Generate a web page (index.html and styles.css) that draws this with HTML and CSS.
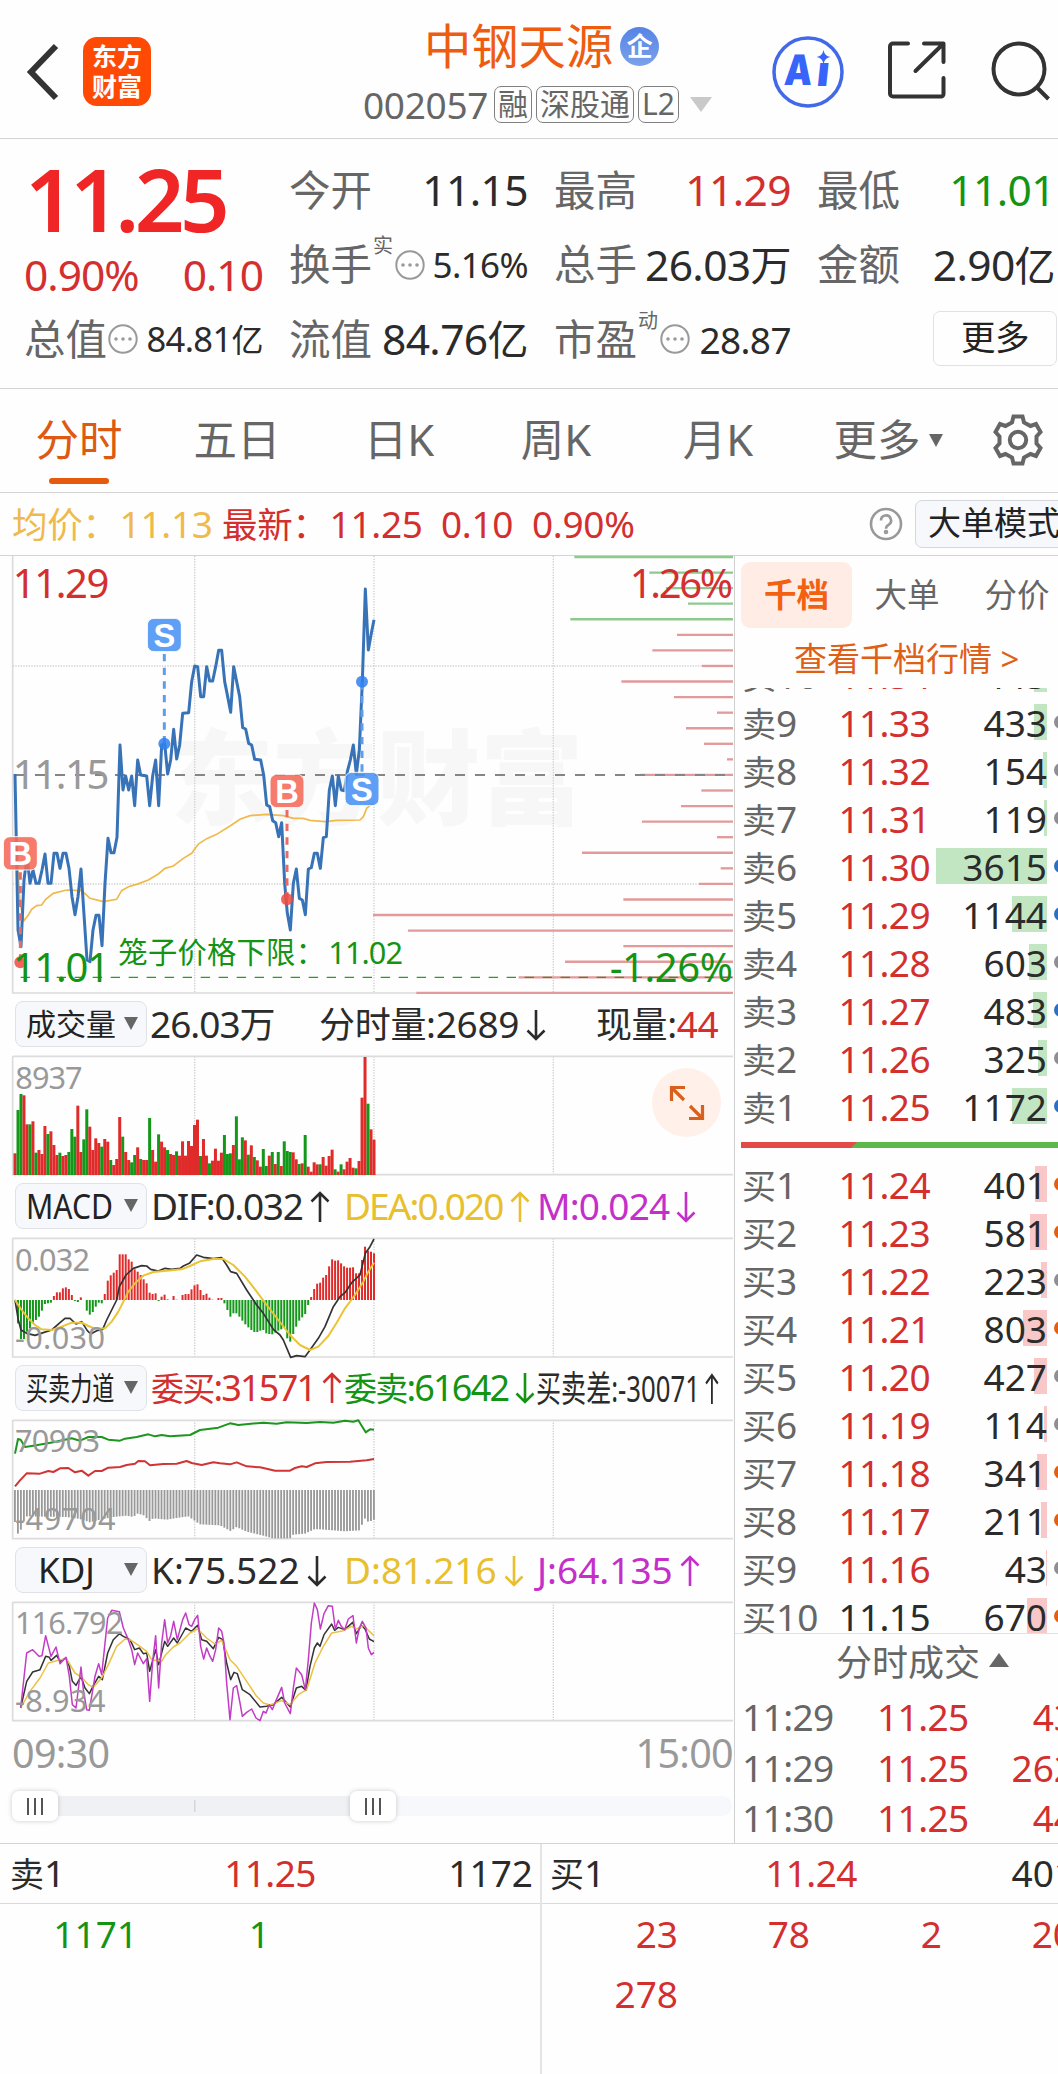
FILE: index.html
```html
<!DOCTYPE html>
<html lang="zh-CN">

<head>
    <meta charset="UTF-8">
    <meta name="viewport" content="width=device-width, initial-scale=1.0">
    <title>中钢天源 002057</title>
    <link rel="stylesheet" href="styles.css">
</head>

<body>
    <svg class="defs" width="0" height="0">
        <symbol id="up" viewBox="0 0 20 32">
            <path d="M10 31V2M1.5 10.5L10 2l8.500 8.500" fill="none" stroke="currentColor" stroke-width="2.600" />
        </symbol>
        <symbol id="down" viewBox="0 0 20 32">
            <path d="M10 1v29M1.500 21.500L10 30l8.500-8.500" fill="none" stroke="currentColor" stroke-width="2.600" />
        </symbol>
        <symbol id="dots" viewBox="0 0 30 30">
            <circle cx="15" cy="15" r="13.700" fill="none" stroke="#999" stroke-width="2" />
            <circle cx="8" cy="15" r="1.800" fill="#999" />
            <circle cx="15" cy="15" r="1.800" fill="#999" />
            <circle cx="22" cy="15" r="1.800" fill="#999" />
        </symbol>
    </svg>

    <!-- Top bar -->
    <header class="topbar">
        <svg class="back" viewBox="0 0 34 58" width="34" height="58">
            <path d="M30 3L5 29l25 26" fill="none" stroke="#333" stroke-width="6" />
        </svg>
        <div class="logo"><span>东方</span><span>财富</span></div>
        <div class="stock">
            <div class="stock-name">中钢天源<span class="badge">企</span></div>
            <div class="stock-code">
                <span class="code">002057</span>
                <span class="tag">融</span>
                <span class="tag">深股通</span>
                <span class="tag">L2</span>
                <i class="caret"></i>
            </div>
        </div>
        <div class="actions">
            <svg width="72" height="74" viewBox="0 0 72 74">
                <circle cx="36" cy="37" r="34" fill="none" stroke="#4169e8" stroke-width="3.500" />
                <text class="ai" x="12" y="50" transform="skewX(-4) translate(3 0)" textLength="28" lengthAdjust="spacingAndGlyphs">A</text>
                <text class="ai" x="44" y="51" transform="skewX(-6) translate(5 0)" font-size="38">ı</text>
                <path d="M51.500 15q1 6 7 7q-6 1-7 7q-1-6-7-7q6-1 7-7z" fill="#3964fa" />
            </svg>
            <svg class="share" width="58" height="58" viewBox="0 0 58 58" fill="none" stroke="#333" stroke-width="4" stroke-linecap="round" stroke-linejoin="round">
                <path d="M20 2.500H5a3 3 0 0 0-3 3V52.500a3 3 0 0 0 3 3H53a2.500 2.500 0 0 0 2.500-2.500V37M36 2.500H55.500V21M54.500 3.500L27.500 30" />
            </svg>
            <svg class="search" width="60" height="62" viewBox="0 0 60 62" fill="none" stroke="#333" stroke-width="4">
                <circle cx="28" cy="29" r="25.500" />
                <path d="M46 47.500L57.500 59" />
            </svg>
        </div>
    </header>

    <!-- Quote summary -->
    <section class="quote">
        <div class="price-big">11.25</div>
        <div class="cell"><span class="label">今开</span><b>11.15</b></div>
        <div class="cell"><span class="label">最高</span><b class="red">11.29</b></div>
        <div class="cell low"><span class="label">最低</span><b class="green">11.01</b></div>

        <div class="cell change"><b class="red">0.90%</b><b class="red">0.10</b></div>
        <div class="cell"><span class="label">换手<sup>实</sup><svg class="more-dot" width="30" height="30"><use href="#dots" /></svg></span><b class="s35">5.16%</b></div>
        <div class="cell"><span class="label">总手</span><b>26.03<i>万</i></b></div>
        <div class="cell low"><span class="label">金额</span><b>2.90<i>亿</i></b></div>

        <div class="cell"><span class="label">总值<svg class="more-dot near" width="30" height="30"><use href="#dots" /></svg></span><b class="s34">84.81<i>亿</i></b></div>
        <div class="cell"><span class="label">流值</span><b>84.76<i>亿</i></b></div>
        <div class="cell"><span class="label">市盈<sup>动</sup><svg class="more-dot" width="30" height="30"><use href="#dots" /></svg></span><b class="s37">28.87</b></div>
        <div class="cell"><span class="more-btn">更多</span></div>
    </section>

    <!-- Period tabs -->
    <nav class="tabs">
        <span class="tab active">分时</span>
        <span class="tab">五日</span>
        <span class="tab">日K</span>
        <span class="tab">周K</span>
        <span class="tab">月K</span>
        <span class="tab">更多<i class="tri"></i></span>
        <svg class="gear" width="52" height="52" viewBox="-26 -26 52 52" fill="none" stroke="#666" stroke-width="4">
            <path d="M-4.500-23.500H4.500L6-17.500L12.500-14L18-16L22.500-8L18.500-3.500V3.500L22.500 8L18 16L12.500 14L6 17.500L4.500 23.500H-4.500L-6 17.500L-12.500 14L-18 16L-22.500 8L-18.500 3.500V-3.500L-22.500-8L-18-16L-12.500-14L-6-17.500Z" />
            <circle r="8.200" />
        </svg>
    </nav>

    <div class="infobar">
        <span class="avg"><em>均价：</em>11.13</span>
        <span class="last red"><em>最新：</em>11.25</span>
        <span class="red diff">0.10</span>
        <span class="red pct">0.90%</span>
        <svg class="help" width="34" height="34" viewBox="0 0 34 34" fill="none" stroke="#999" stroke-width="2.600">
            <circle cx="17" cy="17" r="15" />
            <path d="M12 13.500a5 5 0 1 1 7.500 4.300q-2.500 1.500-2.500 4" />
            <circle cx="17" cy="25" r="1" />
        </svg>
        <span class="mode-btn">大单模式</span>
    </div>

    <main class="main">
        <section class="charts">
            <svg class="price-chart" width="734" height="437" viewBox="0 18 2202 1311">
                <text class="watermark" x="510" y="800" textLength="1240">东方财富</text>
                <g id="priceGrid"></g>
                <g id="levels"></g>
                <path class="dash-mid" d="M45 675H2199" />
                <path class="dash-low" d="M62 1282H2199" />
                <text x="38" y="718" class="grey" textLength="290">11.15</text>
                <polyline id="avgLine" class="line-avg" />
                <polyline id="priceLine" class="line-price" />
                <g id="marks"></g>
                <text x="38" y="143" class="red" textLength="290">11.29</text>
                <text x="38" y="1295" class="green" textLength="292">11.01</text>
                <text x="2199" y="143" class="red" text-anchor="end" textLength="310">1.26%</text>
                <text x="2199" y="1295" class="green" text-anchor="end" textLength="370">-1.26%</text>
                <text x="355" y="1239" class="green cage" textLength="620">笼子价格下限：</text>
                <text x="985" y="1241" class="green cage-num" textLength="224">11.02</text>
            </svg>

            <div class="panel">
                <div class="panel-head vol-head">
                    <span class="chip">成交量<i class="tri"></i></span>
                    <span class="v1">26.03<em>万</em></span>
                    <span class="v2"><em>分时量</em>:2689<svg width="20" height="32"><use href="#down" /></svg></span>
                    <span class="v3"><em>现量</em>:<span class="red">44</span></span>
                </div>
                <svg class="plot" id="volPlot" width="734" height="119" viewBox="0 198 2202 357"></svg>
                <span class="expand">
                    <svg width="36" height="36" viewBox="0 0 36 36" fill="none" stroke="#d9601c" stroke-width="3.200">
                        <path d="M2.500 16V2.500H16M3 3L15 15M33.500 20V33.500H20M33 33L21 21" />
                    </svg>
                </span>
            </div>

            <div class="panel">
                <div class="panel-head">
                    <span class="chip"><span class="macd">MACD</span><i class="tri"></i></span>
                    <span class="dif">DIF:0.032<svg width="20" height="32"><use href="#up" /></svg></span>
                    <span class="yellow dea">DEA:0.020<svg width="20" height="32"><use href="#up" /></svg></span>
                    <span class="purple m">M:0.024<svg width="20" height="32"><use href="#down" /></svg></span>
                </div>
                <svg class="plot" id="macdPlot" width="734" height="119" viewBox="0 744 2202 357"></svg>
            </div>

            <div class="panel">
                <div class="panel-head">
                    <span class="chip"><span class="narrow">买卖力道</span><i class="tri"></i></span>
                    <span class="red force"><em>委买</em>:31571<svg width="20" height="32"><use href="#up" /></svg></span>
                    <span class="green force"><em>委卖</em>:61642<svg width="20" height="32"><use href="#down" /></svg></span>
                    <span class="squeezed"><em>买卖差</em>:-30071<svg width="20" height="32"><use href="#up" /></svg></span>
                </div>
                <svg class="plot" id="forcePlot" width="734" height="119" viewBox="0 181 2202 357"></svg>
            </div>

            <div class="panel">
                <div class="panel-head">
                    <span class="chip"><span class="kdj">KDJ</span><i class="tri"></i></span>
                    <span>K:75.522<svg width="20" height="32"><use href="#down" /></svg></span>
                    <span class="yellow">D:81.216<svg width="20" height="32"><use href="#down" /></svg></span>
                    <span class="purple">J:64.135<svg width="20" height="32"><use href="#up" /></svg></span>
                </div>
                <svg class="plot" id="kdjPlot" width="734" height="119" viewBox="0 727 2202 357"></svg>
            </div>

            <div class="axis"><span>09:30</span><span>15:00</span></div>
            <div class="slider">
                <span class="handle"><i></i><i></i><i></i></span>
                <span class="range"></span>
                <span class="handle"><i></i><i></i><i></i></span>
                <span class="rest"></span>
            </div>
        </section>

        <aside class="book">
            <div class="book-tabs"><span class="on">千档</span><span>大单</span><span>分价</span></div>
            <div class="book-link">查看千档行情 &gt;</div>
            <div class="sells" id="sells"></div>
            <div class="ratio"><span class="ratio-buy"></span></div>
            <div class="buys" id="buys"></div>
            <div class="deals-title">分时成交<i class="tri-up"></i></div>
            <div class="deal"><span>11:29</span><b>11.25</b><b>43</b></div>
            <div class="deal"><span>11:29</span><b>11.25</b><b>262</b></div>
            <div class="deal"><span>11:30</span><b>11.25</b><b>44</b></div>
        </aside>
    </main>

    <footer class="queue">
        <div class="side">
            <div class="side-head"><span><em>卖</em>1</span><b class="red">11.25</b><span>1172</span></div>
            <div class="orders green"><span>1171</span><span>1</span></div>
        </div>
        <div class="side right">
            <div class="side-head"><span><em>买</em>1</span><b class="red">11.24</b><span>401</span></div>
            <div class="orders red"><span>23</span><span>78</span><span>2</span><span>20</span><span>278</span></div>
        </div>
    </footer>

    <script src="script.js"></script>
</body>

</html>
```
FILE: styles.css
```css
* {
    margin: 0;
    padding: 0;
    box-sizing: border-box;
}

body {
    width: 1058px;
    height: 2074px;
    overflow: hidden;
    background: #fefefe;
    color: #2b2b2b;
    font-family: "Noto Sans", "Noto Sans CJK SC", sans-serif;
    font-size: 37px;
    line-height: 1;
}

b, i, em {
    font-weight: normal;
    font-style: normal;
}

.defs { position: absolute; }

.red { color: #d32f2f; fill: #d32f2f; }
.green { color: #149414; fill: #149414; }
.grey { fill: #999; }
.yellow { color: #e8c02e; }
.purple { color: #c42fc9; }

/* Top bar */
.topbar {
    display: flex;
    height: 139px;
    padding: 37px 0 0 26px;
    border-bottom: 1px solid #d4d4d4;
}

.back { margin-top: 6px; }

.logo {
    display: flex;
    flex-direction: column;
    align-items: center;
    justify-content: center;
    gap: 3px;
    width: 68px;
    height: 69px;
    margin-left: 23px;
    border-radius: 14px;
    background: #ff4a05;
    color: #fff;
    font-size: 25px;
    font-weight: 700;
}

.logo span { height: 27px; line-height: 26px; }

.stock {
    width: 380px;
    margin: -18px 0 0 211px;
}

.stock-name {
    display: flex;
    align-items: center;
    height: 54px;
    padding-left: 62px;
    color: #ee5c10;
    font-size: 47.3px;
}

.badge {
    width: 39px;
    height: 39px;
    margin-left: 7px;
    border-radius: 50%;
    background: linear-gradient(#5684e6, #7ba1ea);
    color: #fff;
    font-size: 26px;
    font-weight: 700;
    line-height: 38px;
    text-align: center;
}

.stock-code {
    display: flex;
    align-items: center;
    margin-top: 13px;
    color: #666;
}

.code {
    width: 132px;
    padding-left: 1px;
    letter-spacing: -.3px;
}

.tag {
    height: 37px;
    margin-right: 4px;
    padding: 0 3px;
    border: 1.5px solid #808080;
    border-radius: 7px;
    font-size: 30px;
    line-height: 33px;
}

.caret {
    margin-left: 7px;
    border: 11px solid transparent;
    border-top: 15px solid #c9c9c9;
    border-bottom: 0;
}

.actions {
    display: flex;
    margin-left: 30px;
    flex: none;
}

.actions svg { flex: none; }
.actions svg:first-child { margin-top: -2px; }
.share { margin: 4px 0 0 44px; }
.search { margin: 3px 0 0 45px; }

.ai {
    fill: #3964fa;
    font-family: Inter, "Open Sans", sans-serif;
    font-size: 42px;
    font-weight: 900;
}

/* Quote summary */
.quote {
    display: grid;
    grid-template-columns: 239px 239px 237px 240px;
    grid-template-rows: repeat(3, 74.5px);
    column-gap: 26px;
    height: 250px;
    padding: 14px 0 0 24px;
    border-bottom: 1px solid #d4d4d4;
}

.price-big {
    padding-left: 1px;
    color: #f02626;
    font-size: 87px;
    font-weight: 600;
    line-height: 90px;
    letter-spacing: -4.6px;
}

.cell {
    display: flex;
    align-items: center;
    justify-content: space-between;
    font-size: 42.5px;
    letter-spacing: -.6px;
    white-space: nowrap;
}

.label {
    display: flex;
    align-items: center;
    color: #666;
    font-size: 41.5px;
    letter-spacing: 0;
}

.label sup {
    align-self: flex-start;
    margin: -8px 0 0 1px;
    font-size: 20px;
}

.cell i { font-size: 41px; }
.change { padding-top: 21px; letter-spacing: -1px; }
.low { padding-right: 2px; }
.s34, .s35 { font-size: 35px; }
.cell .s34 { font-size: 34.5px; }
.s34 i { font-size: 32px; }
.s37 { font-size: 37px; }
.more-dot { margin-left: 2px; }
.near { margin-left: 1px; }

.more-btn {
    width: 124px;
    height: 55px;
    margin: -2px 0 0 auto;
    border: 1.5px solid #e0e2e5;
    border-radius: 7px;
    color: #222;
    font-size: 34.5px;
    line-height: 50px;
    text-align: center;
}

/* Period tabs */
.tabs {
    display: grid;
    grid-template-columns: 158px 158px 166px 148px 176px 164px 1fr;
    height: 104px;
    border-bottom: 1px solid #d4d4d4;
    color: #666;
    font-size: 43.5px;
}

.tab {
    display: flex;
    align-items: center;
    justify-content: center;
    position: relative;
    padding-bottom: 1px;
}

.tab .tri { margin-left: 8px; }

.active { color: #dc5a12; }

.active::after {
    content: "";
    position: absolute;
    left: 49px;
    bottom: 8px;
    width: 60px;
    height: 6px;
    border-radius: 3px;
    background: #e55a0c;
}

.tri {
    border: 7.5px solid transparent;
    border-top: 13px solid #666;
    border-bottom: 0;
}

.gear { margin: 25px 0 0 22px; }

.infobar {
    display: flex;
    align-items: center;
    height: 63px;
    padding: 0 0 1px 12px;
    border-bottom: 1px solid #d4d4d4;
    white-space: nowrap;
    letter-spacing: -.3px;
}

.infobar > * { flex: none; }
.infobar em { margin-right: 2px; font-size: 35.5px; }
.avg { width: 210px; color: #efba4c; }
.last { width: 219px; }
.diff { width: 91px; }
.pct { width: 337px; }

.mode-btn {
    width: 160px;
    height: 48px;
    margin-left: 12px;
    padding-left: 12px;
    border: 1.5px solid #d4d8dd;
    border-radius: 7px;
    background: #f6f8fb;
    color: #222;
    font-size: 33px;
    line-height: 44px;
    letter-spacing: 0;
}

/* Charts */
.main {
    display: flex;
    height: 1288px;
    border-bottom: 1px solid #d4d4d4;
}

.charts {
    width: 735px;
    border-right: 1px solid #d0d0d0;
}

.charts svg { overflow: visible; }
.price-chart { display: block; }
.price-chart text { font-size: 120px; }
.price-chart .cage { font-size: 88px; }
.price-chart .cage-num { font-size: 92px; }

.price-chart .watermark {
    fill: #f7f7f7;
    font-size: 310px;
    font-weight: 900;
}

.frame { fill: none; stroke: #dcdcdc; stroke-width: 5; }
.dots { fill: none; stroke: #d0d0d0; stroke-width: 4; stroke-dasharray: 4 4; }
.dash-mid { stroke: #858585; stroke-width: 6; stroke-dasharray: 30 30; }
.dash-low { stroke: #2b9a2b; stroke-width: 4; stroke-dasharray: 28 26; }
.line-price { fill: none; stroke: #3873b7; stroke-width: 9; stroke-linejoin: round; }
.line-avg { fill: none; stroke: #f0b94c; stroke-width: 5; }

.price-chart .mark { fill: #fff; font-size: 98px; font-weight: 700; font-family: "Liberation Sans", sans-serif; }

.panel {
    position: relative;
    height: 182px;
}

.panel-head {
    display: grid;
    grid-template-columns: 133px 193px 193px 190px;
    align-items: center;
    height: 63px;
    padding: 0 0 2px 15px;
    white-space: nowrap;
}

.panel-head > span:not(.chip) { padding-left: 3px; }
.panel-head em { font-size: 36px; }
.panel-head svg { margin-left: 7px; vertical-align: -3px; }
.panel-head .dif { letter-spacing: -1.3px; }
.panel-head .dea { letter-spacing: -1.9px; }
.panel-head .m { letter-spacing: -.8px; }

.panel-head .force {
    padding-left: 0;
    font-size: 36px;
    letter-spacing: -1.8px;
}

.panel-head .force em { font-size: 33px; }

.panel-head.vol-head { grid-template-columns: 135px 169px 277px 150px; }
.panel-head.vol-head .v1, .panel-head.vol-head .v2, .panel-head.vol-head .v3 { padding-left: 0; }
.v1 { letter-spacing: -1px; }
.v2 { letter-spacing: -.3px; }
.v3 { letter-spacing: -.4px; }

.squeezed {
    transform: scaleX(.695);
    transform-origin: 0 50%;
}

.chip {
    display: flex;
    align-items: center;
    justify-content: space-between;
    width: 132px;
    height: 46px;
    margin-top: 1px;
    padding: 0 8px 1px 10px;
    border: 1px solid #dfe3e8;
    border-radius: 8px;
    background: #f6f8fb;
    color: #222;
    font-size: 30px;
}

.macd { width: 88px; font-size: 35px; transform: scaleX(.86); transform-origin: 0 50%; }
.narrow { width: 88px; font-size: 32px; transform: scaleX(.69); transform-origin: 0 50%; }
.kdj { padding-left: 12px; font-size: 35px; }

.plot { display: block; }
.plot text { font-size: 92px; fill: #999; }
.bar-up { fill: #e02b2b; }
.bar-down { fill: #14981a; }

.expand {
    display: flex;
    align-items: center;
    justify-content: center;
    position: absolute;
    left: 652px;
    top: 75px;
    width: 69px;
    height: 69px;
    border-radius: 50%;
    background: #fff0e9;
}

.axis {
    display: flex;
    justify-content: space-between;
    padding: 13px 1px 0 12px;
    height: 70px;
    color: #999;
    font-size: 39.5px;
    letter-spacing: -.7px;
}

.slider {
    display: flex;
    align-items: center;
    height: 30px;
    padding: 0 2px 0 12px;
}

.handle {
    display: flex;
    align-items: center;
    justify-content: center;
    gap: 5px;
    width: 46px;
    height: 30px;
    border-radius: 7px;
    background: #fff;
    box-shadow: 0 0 5px rgba(0, 0, 0, .2);
    z-index: 1;
}

.handle i { width: 2px; height: 17px; background: #555; }

.range {
    width: 292px;
    height: 20px;
    background: linear-gradient(#d6d6d6, #d6d6d6) 136px 50% / 1.5px 12px no-repeat, #f0f1f4;
}

.rest {
    flex: 1;
    height: 20px;
    border-radius: 0 10px 10px 0;
    background: #f7f8fb;
}

/* Order book */
.book {
    width: 323px;
    overflow: hidden;
}

.book-tabs {
    display: flex;
    padding: 6px 0 0 6px;
    color: #666;
    font-size: 32.5px;
    line-height: 66px;
}

.book-tabs span { width: 110px; text-align: center; flex: none; }

.book-tabs .on {
    width: 111px;
    height: 66px;
    border-radius: 9px;
    background: #ffece4;
    color: #f26111;
    font-weight: 700;
}

.book-link {
    height: 60px;
    padding-left: 59px;
    color: #e05f17;
    font-size: 33px;
    line-height: 62px;
    white-space: nowrap;
}

.sells {
    display: flex;
    flex-direction: column;
    justify-content: flex-end;
    height: 442px;
    overflow: hidden;
}

.row {
    display: grid;
    grid-template-columns: 95px 93px 117px 11px;
    align-items: center;
    flex: none;
    height: 48px;
    padding-left: 7px;
}

.row .name { color: #666; white-space: nowrap; }
.row em, .side-head em { font-size: 34px; }
.row .at { text-align: right; letter-spacing: -.6px; }
.row .at.flat { color: #2b2b2b; }

.row .qty {
    display: flex;
    align-items: center;
    justify-content: flex-end;
    position: relative;
    height: 36px;
}

/* depth bar behind the quantity */
.depth {
    position: absolute;
    right: 0;
    top: 0;
    height: 36px;
}

.sells .depth { background: #c1e6c1; }
.buys .depth { background: #f8c8c8; }
.row .num { position: relative; }

.dot {
    width: 14px;
    height: 14px;
    margin-left: 7px;
    border-radius: 50%;
    background: #8e8e93;
}

.dot.blue { background: #2e6fc0; }
.dot.orange { background: #e2600f; }

.ratio {
    height: 6px;
    margin: 12px 0 12px 6px;
    background: #5cb848;
}

.ratio-buy {
    display: block;
    width: 116px;
    height: 6px;
    background: #e24b48;
    clip-path: polygon(0 0, 100% 0, 110px 100%, 0 100%);
}

.buys {
    height: 474px;
    overflow: hidden;
    border-bottom: 1px solid #e2e2e2;
}

.deals-title {
    display: flex;
    align-items: center;
    height: 58px;
    padding: 0 0 1px 101px;
    color: #666;
    font-size: 36px;
}

.tri-up {
    margin: -6px 0 0 9px;
    border: 10.5px solid transparent;
    border-bottom: 14px solid #666;
    border-top: 0;
}

.deal {
    display: grid;
    grid-template-columns: 135px 91px 107px;
    align-items: center;
    height: 50.7px;
    padding: 0 0 2px 7px;
    color: #d32f2f;
    letter-spacing: -.6px;
}

.deal span { color: #666; }
.deal b:last-child { text-align: right; letter-spacing: 0; }

/* Bottom queue */
.queue { display: flex; height: 230px; }
.side { width: 540px; flex: none; }
.right { border-left: 2px solid #e4e4e4; }

.side-head {
    display: grid;
    grid-template-columns: 1fr 1fr 1fr;
    align-items: center;
    height: 60px;
    padding: 0 7px 2px 10px;
    border-bottom: 1px solid #d8dadd;
}

.right .side-head { padding: 0 5px 2px 8px; }
.side-head b { margin-left: -3px; text-align: center; letter-spacing: -.6px; }
.side-head span:last-child { text-align: right; }

.orders {
    display: grid;
    grid-template-columns: repeat(4, 132px);
    grid-auto-rows: 60px;
    align-items: center;
    padding-left: 6px;
    margin-top: -1px;
    text-align: right;
}

.right .orders { padding-left: 4px; }
```
FILE: script.js
```js
const NS = "http://www.w3.org/2000/svg";
const LEFT = 38, RIGHT = 2199, STEP = 8.975, FIRST = 45;

function add(parent, tag, attrs, text) {
    const el = document.createElementNS(NS, tag);
    for (const key in attrs) el.setAttribute(key, attrs[key]);
    if (text) el.textContent = text;
    parent.appendChild(el);
    return el;
}

function grid(parent, top, bottom) {
    [584, 1122, 1660].forEach(x => add(parent, "path", { class: "dots", d: `M${x} ${top}V${bottom}` }));
    add(parent, "path", { class: "frame", d: `M${RIGHT} ${bottom}H${LEFT}V${top}` });
}

function line(parent, points, color, width) {
    add(parent, "polyline", { points, fill: "none", stroke: color, "stroke-width": width, "stroke-linejoin": "round" });
}

// ---- Price chart ----
const priceGrid = document.getElementById("priceGrid");
grid(priceGrid, 18, 1329);
[348, 1002].forEach(y => add(priceGrid, "path", { class: "dots", d: `M${LEFT} ${y}H${RIGHT}` }));

// volume by price level, left end of each bar
const levels = [1723, 1948, 1998, 2064, 1711, 2031, 1957, 2106, 1864, 2022, 2151, 2058, 2112, 2181, 1921, 2104, 2043, 1926, 2151, 1746, 2162, 2097, 1870, 1119, 1224, 1870, 1695, 1556, 1249];
levels.forEach((x, i) => {
    const y = 21 + i * 46.7;
    add(document.getElementById("levels"), "path", { d: `M${x} ${y}H${RIGHT}`, stroke: i < 5 ? "#8fc98f" : "#e39a9a", "stroke-width": 7 });
});

document.getElementById("priceLine").setAttribute("points",
    "45,672 54,1140 63,1190 72,990 81,920 90,1000 99,960 108,1000 117,1000 126,960 135,912 144,1000 153,1000 162,910 171,910 180,955 189,910 198,910 207,955 216,1040 225,1094 234,1040 243,957 252,1094 261,1230 270,1235 279,1140 288,1096 297,1096 306,1187 315,1000 324,865 333,908 342,908 351,862 360,585 369,720 377,678 386,720 395,678 404,767 413,630 422,675 440,678 449,767 458,678 467,630 476,767 485,585 494,580 503,672 512,630 521,538 530,627 539,585 548,490 566,488 575,395 584,348 593,350 602,440 611,440 620,350 629,393 638,393 647,350 656,301 665,301 674,395 683,440 692,487 701,350 710,395 719,440 728,533 737,537 746,580 755,585 764,628 782,630 791,675 800,765 809,770 818,812 827,818 836,860 845,818 854,1000 862,1090 871,1140 880,1000 889,957 898,1045 907,1050 916,1094 925,957 934,953 943,910 952,910 961,955 970,863 979,860 988,720 997,678 1006,767 1015,678 1024,720 1033,722 1042,665 1051,630 1060,585 1069,672 1078,600 1087,395 1096,117 1105,300 1114,250 1122,209");
document.getElementById("avgLine").setAttribute("points",
    "50,900 60,1060 72,1112 85,1095 95,1078 110,1067 125,1065 137,1048 160,1030 200,1020 245,1022 270,1045 310,1055 350,1048 365,1022 385,1010 410,1003 445,990 475,972 495,955 520,948 550,925 575,910 595,882 620,866 650,853 690,828 720,808 750,797 800,793 850,797 880,805 910,805 930,811 975,815 1010,811 1080,810 1090,800 1100,775 1120,757");

// buy / sell marks: letter, x, badge centre, dot
const BLUE = "#4a92f5", CORAL = "#f56a5a";
[["S", 493, 255, 581], ["B", 861, 723, 1048], ["B", 61, 910, 1237], ["S", 1086, 717, 395]].forEach(([letter, x, y, dot]) => {
    const g = document.getElementById("marks");
    const sell = letter === "S";
    const from = dot > y ? y + 57 : y - 52;
    add(g, "path", { d: `M${x} ${from}V${dot}`, stroke: sell ? "#5f9de8" : "#ea6a64", "stroke-width": 9, "stroke-dasharray": "22 19" });
    add(g, "circle", { cx: x, cy: dot, r: 18, fill: sell ? "#2f80f0" : "#ee4a42", opacity: .85 });
    add(g, "rect", { x: x - 51, y: y - 50, width: 102, height: 100, rx: 20, fill: sell ? BLUE : CORAL, opacity: .88, stroke: "#fff", "stroke-width": 3 });
    add(g, "text", { class: "mark", x, y: y + 35, "text-anchor": "middle" }, letter);
});

// ---- Volume ----
const volume = "490r 360g 312g 316r 403r 403g 394r 488g 480r 492r 408r 432g 424r 465r 495r 488g 498r 495r 486g 417g 440g 347r 486r 448g 358g 410r 480r 445r 459r 470g 447r 455r 510g 525r 507r 381r 440g 486r 510r 517g 495g 472r 507g 510r 510r 384g 480r 515r 433g 455r 472r 480g 492r 495r 484g 497r 454r 497r 453r 468r 405r 389r 498g 447r 497r 520g 512r 476r 512r 488r 435g 492g 490g 465r 379g 508g 442g 451r 494g 466r 501g 511r 530r 477g 528g 497r 486g 522r 486g 528r 454g 483g 486g 487r 508r 522g 520r 435g 530r 545r 517r 523r 523g 501r 527r 498r 479r 538g 545r 523g 538r 515r 504r 533r 535g 513r 323r 201r 341g 418r 449r".split(" ");
const vol = document.getElementById("volPlot");
grid(vol, 199, 554);
add(vol, "path", { class: "frame", d: `M${LEFT} 199H${RIGHT}` });
add(vol, "text", { x: 46, y: 296, textLength: 202 }, "8937");
volume.forEach((v, i) => {
    const y = parseInt(v);
    add(vol, "rect", { class: v.endsWith("r") ? "bar-up" : "bar-down", x: FIRST - 4.5 + i * STEP, y, width: 9, height: 555 - y });
});

// ---- MACD ----
const macdBars = [930, 1000, 1047, 1047, 1025, 1015, 1000, 990, 980, 962, 942, 940, 938, 918, 907, 907, 895, 892, 897, 915, 933, 936, 922, 930, 962, 974, 966, 950, 938, 940, 912, 872, 856, 848, 840, 793, 793, 793, 808, 815, 838, 845, 855, 868, 880, 908, 912, 910, 933, 920, 914, 928, 930, 918, 929, 930, 915, 912, 912, 898, 886, 883, 900, 915, 911, 923, 929, 930, 924, 924, 940, 960, 980, 970, 970, 980, 992, 1003, 1012, 1020, 1026, 1026, 1022, 1020, 1030, 1032, 1033, 1028, 1022, 1018, 1012, 1045, 1055, 1032, 1010, 992, 982, 972, 945, 921, 897, 881, 878, 863, 855, 829, 808, 812, 811, 820, 829, 833, 833, 832, 850, 850, 810, 770, 782, 785, 790];
const macd = document.getElementById("macdPlot");
grid(macd, 745, 1101);
add(macd, "path", { class: "frame", d: `M${LEFT} 745H${RIGHT}` });
macdBars.forEach((v, i) => {
    add(macd, "rect", { class: v < 930 ? "bar-up" : "bar-down", x: FIRST - 3 + i * STEP, y: Math.min(v, 930), width: 6, height: Math.abs(v - 930) });
});
line(macd, "45,930 55,990 63,1020 80,1030 105,1036 130,1028 155,1020 180,998 195,985 210,985 228,1002 245,995 262,1022 272,1032 290,1022 308,1018 320,990 350,930 358,890 378,855 400,835 425,827 440,828 452,838 475,843 495,835 515,838 540,835 550,828 568,820 590,795 610,802 640,806 665,803 680,825 692,845 710,850 740,900 770,945 790,970 820,1018 840,1035 850,1050 872,1102 890,1097 915,1100 930,1080 955,1045 975,1010 1000,950 1020,920 1035,908 1055,878 1080,855 1096,790 1110,770 1122,747", "#333", 5);
line(macd, "45,930 65,960 85,985 105,1005 125,1018 155,1020 185,1010 215,998 245,998 265,1008 285,1016 315,1015 335,995 355,965 370,935 385,905 405,880 430,857 460,846 500,842 545,838 570,828 600,814 640,807 670,807 700,825 735,860 765,898 800,945 835,990 870,1035 900,1065 930,1080 955,1070 985,1038 1010,998 1035,955 1065,915 1090,875 1105,845 1122,818", "#ebc433", 6);
add(macd, "text", { x: 45, y: 842, textLength: 225 }, "0.032");
add(macd, "text", { x: 45, y: 1076, textLength: 270 }, "-0.030");

// ---- Buy / sell force ----
const force = document.getElementById("forcePlot");
grid(force, 181, 537);
add(force, "path", { class: "frame", d: `M${LEFT} 182H${RIGHT}` });
const forceEnds = [[45, 487], [54, 522], [63, 510], [72, 485], [81, 470], [200, 472], [240, 478], [270, 488], [300, 480], [340, 472], [380, 468], [400, 472], [413, 462], [430, 466], [449, 484], [460, 476], [500, 480], [530, 475], [565, 470], [600, 494], [660, 497], [692, 514], [710, 502], [740, 516], [790, 528], [820, 536], [870, 536], [880, 525], [915, 522], [945, 508], [1000, 512], [1035, 515], [1078, 512], [1096, 475], [1105, 487], [1123, 480]];
for (let i = 0; i <= 120; i++) {
    const x = FIRST + i * STEP;
    const n = Math.max(1, forceEnds.findIndex(p => p[0] >= x));
    const [x0, y0] = forceEnds[n - 1], [x1, y1] = forceEnds[n];
    const y = y0 + (y1 - y0) * (x - x0) / (x1 - x0);
    add(force, "rect", { x: x - 3, y: 391, width: 5.5, height: y - 391, fill: "#999" });
}
line(force, "45,282 54,238 62,240 75,262 100,258 160,248 215,236 240,243 265,232 305,232 325,240 360,243 375,237 410,232 445,224 465,230 485,226 510,230 570,226 600,211 655,204 690,191 715,196 745,193 790,189 830,192 860,188 920,190 960,187 1000,189 1035,183 1060,186 1075,182 1085,198 1097,218 1110,209 1122,210", "#1c961c", 6);
line(force, "45,380 60,362 80,341 120,342 145,334 160,337 180,326 205,325 225,338 245,333 265,348 285,334 305,334 325,324 360,322 380,316 405,312 415,304 435,305 450,317 490,313 530,312 560,304 575,310 605,316 640,308 660,311 690,314 710,308 740,320 780,323 800,327 825,333 870,333 885,325 905,320 920,322 945,311 980,307 1050,306 1100,302 1122,298", "#d03434", 6);
add(force, "text", { x: 45, y: 278, textLength: 255 }, "70903");
add(force, "text", { x: 45, y: 512, textLength: 302 }, "-49704");

// ---- KDJ ----
const kdj = document.getElementById("kdjPlot");
grid(kdj, 727, 1083);
add(kdj, "path", { class: "frame", d: `M${LEFT} 728H${RIGHT}` });
line(kdj, "62,1045 80,965 98,937 120,930 137,890 148,893 153,902 170,887 180,905 198,895 208,920 217,965 228,977 243,950 255,985 268,1002 280,978 296,950 307,960 323,880 340,840 358,822 370,830 390,840 404,870 418,865 430,882 440,880 449,935 467,870 476,915 494,845 503,860 521,835 532,850 557,805 575,815 593,797 605,840 620,845 640,867 656,833 668,840 680,910 692,960 702,938 712,942 727,990 750,1005 780,1042 800,1040 820,1035 845,1013 871,1042 889,985 905,980 918,992 930,920 943,865 952,850 960,860 972,825 995,793 1004,812 1015,803 1034,810 1058,788 1069,822 1085,797 1095,808 1108,838 1122,846", "#333", 4.5);
line(kdj, "62,1045 90,995 120,955 145,910 180,900 200,898 225,940 245,953 265,975 280,983 305,955 325,915 350,860 375,838 390,840 420,860 440,875 455,900 485,905 497,885 520,862 540,850 570,820 593,808 620,835 645,853 665,842 690,900 710,920 740,965 770,1010 790,1030 810,1036 845,1023 870,1035 895,1005 920,990 945,910 970,860 995,820 1030,813 1055,800 1070,808 1090,797 1105,812 1122,828", "#ebc045", 4.5);
line(kdj, "62,1045 80,880 98,870 117,890 126,888 137,828 153,890 168,862 180,912 198,893 208,950 217,1035 228,1045 243,922 250,990 260,1050 268,1052 285,950 296,912 305,945 313,870 323,775 335,752 358,756 370,805 385,840 395,870 404,915 413,880 430,912 440,897 449,1025 458,905 467,828 476,985 485,850 494,780 503,850 512,828 521,785 532,840 548,780 557,760 567,795 575,800 584,780 593,767 602,860 611,898 620,865 629,888 638,905 647,870 656,805 665,815 672,850 680,970 690,1080 700,985 710,978 720,1030 727,1070 740,1058 755,1048 768,1075 780,1083 790,1055 798,1060 808,1035 817,1050 827,1025 845,983 854,1030 871,1062 880,985 889,925 905,945 916,990 925,900 934,790 943,730 952,750 961,808 972,762 985,738 997,740 1006,808 1015,782 1024,800 1034,810 1045,778 1059,768 1069,850 1078,805 1087,785 1098,805 1105,865 1114,885 1122,878", "#c23cc6", 4.5);
add(kdj, "text", { x: 45, y: 824, textLength: 325 }, "116.792");
add(kdj, "text", { x: 45, y: 1058, textLength: 272 }, "-8.934");

// ---- Order book: level, price, quantity, depth width, dot ----
const sells = [
    [10, "11.34", 443, 13, ""], [9, "11.33", 433, 13, ""], [8, "11.32", 154, 4, ""], [7, "11.31", 119, 3, ""],
    [6, "11.30", 3615, 111, "blue"], [5, "11.29", 1144, 35, "blue"], [4, "11.28", 603, 18, ""],
    [3, "11.27", 483, 14, "blue"], [2, "11.26", 325, 9, ""], [1, "11.25", 1172, 35, "blue"]
];
const buys = [
    [1, "11.24", 401, 12, "orange"], [2, "11.23", 581, 17, "orange"], [3, "11.22", 223, 6, ""],
    [4, "11.21", 803, 24, "orange"], [5, "11.20", 427, 13, ""], [6, "11.19", 114, 3, ""],
    [7, "11.18", 341, 10, "orange"], [8, "11.17", 211, 6, "orange"], [9, "11.16", 43, 1, ""], [10, "11.15", 670, 20, "orange"]
];

function renderRows(id, side, rows) {
    document.getElementById(id).innerHTML = rows.map(([level, price, qty, width, dot]) => `
        <div class="row">
            <span class="name"><em>${side}</em>${level}</span>
            <span class="at red ${price === "11.15" ? "flat" : ""}">${price}</span>
            <span class="qty"><i class="depth" style="width:${width}px"></i><span class="num">${qty}</span></span>
            <i class="dot ${dot}"></i>
        </div>`).join("");
}

renderRows("sells", "卖", sells);
renderRows("buys", "买", buys);
```
